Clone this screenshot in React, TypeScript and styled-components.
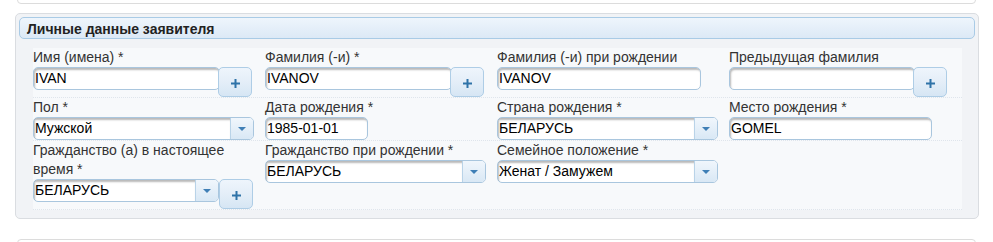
import React from 'react';
import styled, { createGlobalStyle } from 'styled-components';

const GlobalStyle = createGlobalStyle`
  html, body {
    margin: 0;
    padding: 0;
    background: #fff;
  }
  body {
    font-family: 'Liberation Sans', Arial, sans-serif;
    font-size: 14px;
    color: #222;
  }
`;

const Page = styled.div`
  width: 993px;
  height: 242px;
  overflow: hidden;
`;

const StubBox = styled.div<{ $bottom?: boolean }>`
  margin: 0 17px;
  height: 12px;
  background: #fff;
  border: 1px solid #dcdcdc;
  border-radius: 4px;
  margin-top: ${(p) => (p.$bottom ? '20px' : '-10px')};
`;

const Panel = styled.div`
  margin: 9px 14px 0 15px;
  border: 1px solid #dadde1;
  border-radius: 5px;
  background: #f1f3f6;
  padding: 3px 3px 8px;
`;

const Header = styled.div`
  height: 20px;
  line-height: 22px;
  border: 1px solid #a9cbe6;
  border-radius: 5px;
  background: linear-gradient(#eef5fc, #dce9f6);
  padding-left: 7px;
  font-weight: bold;
  font-size: 14px;
  color: #222;
`;

const Content = styled.div`
  margin: 9px 13px 0 14px;
  background: #f7f9fb;
`;

const Row = styled.div`
  display: grid;
  grid-template-columns: repeat(4, 232px);
  border-bottom: 1px dotted #dfe5ec;
`;

const Field = styled.div`
  display: flex;
  flex-direction: column;
`;

const Label = styled.label`
  line-height: 19px;
  font-size: 14px;
  color: #333;
`;

const Control = styled.div`
  display: flex;
  align-items: flex-start;
`;

const TextInput = styled.div<{ $w: number }>`
  box-sizing: border-box;
  width: ${(p) => p.$w}px;
  height: 23px;
  line-height: 21px;
  border: 1px solid #a9c6de;
  border-radius: 5px;
  background: #fff;
  box-shadow: inset 1px 2px 2px rgba(0, 0, 0, 0.28);
  padding-left: 1px;
  font-size: 14px;
  color: #000;
  white-space: nowrap;
  overflow: hidden;
`;

const SelectBox = styled.div<{ $w: number }>`
  box-sizing: border-box;
  width: ${(p) => p.$w}px;
  height: 23px;
  display: flex;
  border: 1px solid #a9c6de;
  border-radius: 5px;
  background: #fff;
  overflow: hidden;
`;

const SelectText = styled.div`
  flex: 1;
  line-height: 21px;
  padding-left: 1px;
  box-shadow: inset 1px 2px 2px rgba(0, 0, 0, 0.28);
  font-size: 14px;
  color: #000;
  white-space: nowrap;
`;

const SelectArrow = styled.div`
  width: 22px;
  border-left: 1px solid #b9d3e8;
  background: linear-gradient(#f0f6fc, #d9e8f5);
  display: flex;
  align-items: center;
  justify-content: center;
`;

const PlusButton = styled.div<{ $overlap?: boolean }>`
  box-sizing: border-box;
  width: 34px;
  height: 30px;
  margin-left: ${(p) => (p.$overlap ? '-2px' : '0')};
  border: 1px solid #aecde6;
  border-radius: 5px;
  background: linear-gradient(#eef5fc 0%, #e4eef8 50%, #d6e6f4 100%);
  display: flex;
  align-items: center;
  justify-content: center;
  padding-top: 2px;
`;

const Plus = () => (
  <svg width="9" height="9" viewBox="0 0 9 9">
    <rect x="3.5" y="0" width="2" height="9" fill="#2f73a8" />
    <rect x="0" y="3.5" width="9" height="2" fill="#2f73a8" />
  </svg>
);

const Arrow = () => (
  <svg width="8" height="4" viewBox="0 0 8 4">
    <polygon points="0,0 8,0 4,4" fill="#3f7fb6" />
  </svg>
);

const Select: React.FC<{ w: number; value: string }> = ({ w, value }) => (
  <SelectBox $w={w}>
    <SelectText>{value}</SelectText>
    <SelectArrow>
      <Arrow />
    </SelectArrow>
  </SelectBox>
);

const App: React.FC = () => {
  return (
    <Page>
      <GlobalStyle />
      <StubBox />
      <Panel>
        <Header>Личные данные заявителя</Header>
        <Content>
          <Row>
            <Field>
              <Label>Имя (имена) *</Label>
              <Control>
                <TextInput $w={187}>IVAN</TextInput>
                <PlusButton $overlap>
                  <Plus />
                </PlusButton>
              </Control>
            </Field>
            <Field>
              <Label>Фамилия (-и) *</Label>
              <Control>
                <TextInput $w={187}>IVANOV</TextInput>
                <PlusButton $overlap>
                  <Plus />
                </PlusButton>
              </Control>
            </Field>
            <Field>
              <Label>Фамилия (-и) при рождении</Label>
              <Control>
                <TextInput $w={204}>IVANOV</TextInput>
              </Control>
            </Field>
            <Field>
              <Label>Предыдущая фамилия</Label>
              <Control>
                <TextInput $w={186}></TextInput>
                <PlusButton $overlap>
                  <Plus />
                </PlusButton>
              </Control>
            </Field>
          </Row>
          <Row>
            <Field>
              <Label>Пол *</Label>
              <Control>
                <Select w={221} value="Мужской" />
              </Control>
            </Field>
            <Field>
              <Label>Дата рождения *</Label>
              <Control>
                <TextInput $w={103}>1985-01-01</TextInput>
              </Control>
            </Field>
            <Field>
              <Label>Страна рождения *</Label>
              <Control>
                <Select w={221} value="БЕЛАРУСЬ" />
              </Control>
            </Field>
            <Field>
              <Label>Место рождения *</Label>
              <Control>
                <TextInput $w={203}>GOMEL</TextInput>
              </Control>
            </Field>
          </Row>
          <Row>
            <Field>
              <Label>
                Гражданство (а) в настоящее
                <br />
                время *
              </Label>
              <Control>
                <Select w={186} value="БЕЛАРУСЬ" />
                <PlusButton>
                  <Plus />
                </PlusButton>
              </Control>
            </Field>
            <Field>
              <Label>Гражданство при рождении *</Label>
              <Control>
                <Select w={221} value="БЕЛАРУСЬ" />
              </Control>
            </Field>
            <Field>
              <Label>Семейное положение *</Label>
              <Control>
                <Select w={221} value="Женат / Замужем" />
              </Control>
            </Field>
            <Field />
          </Row>
        </Content>
      </Panel>
      <StubBox $bottom />
    </Page>
  );
};

export default App;
